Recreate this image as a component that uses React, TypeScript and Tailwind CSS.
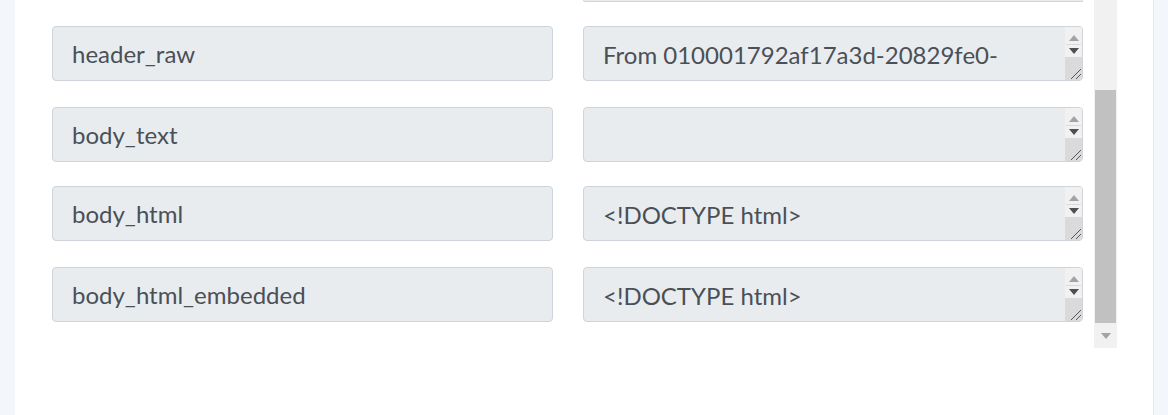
import React from 'react';

const rows = [
  { name: 'header_raw', top: 'mt-[24px]', value: ['From 010001792af17a3d-20829fe0-', 'b2c4-4bd2-9a6e-7f1d0c3b5e21-000000'] },
  { name: 'body_text', top: 'mt-[26px]', value: [] as string[] },
  { name: 'body_html', top: 'mt-[24px]', value: ['<!DOCTYPE html>', '<html lang="en">'] },
  { name: 'body_html_embedded', top: 'mt-[26px]', value: ['<!DOCTYPE html>', '<html lang="en">'] },
];

const font = { fontFamily: 'Lato, "Open Sans", sans-serif' };

function TextareaBar() {
  return (
    <div className="relative flex w-[17px] shrink-0 flex-col bg-[#f1f1f1]">
      <div className="flex h-[17px] items-end justify-center pb-[3px]">
        <svg width="10" height="6" viewBox="0 0 10 6">
          <path d="M5 0 L10 6 L0 6 Z" fill="#a3a3a3" />
        </svg>
      </div>
      <div className="mx-[1px] h-px bg-[#d9d9d9]" />
      <div className="flex h-[12px] items-start justify-center pt-[3px]">
        <svg width="10" height="6" viewBox="0 0 10 6">
          <path d="M0 0 L10 0 L5 6 Z" fill="#505050" />
        </svg>
      </div>
      <div className="flex-1 bg-[#dadada]" />
      <svg className="absolute bottom-0 right-0" width="14" height="14" viewBox="0 0 14 14">
        <path d="M13 3 L3 13" stroke="#555" strokeWidth="1" />
        <path d="M13 8 L8 13" stroke="#555" strokeWidth="1" />
      </svg>
    </div>
  );
}

function FakeTextarea({ lines }: { lines: string[] }) {
  return (
    <div className="flex h-[55px] w-[500px] overflow-hidden rounded-[4px] border border-[#ced4da] bg-[#e9ecef]">
      <div className="flex-1 overflow-hidden whitespace-nowrap pl-[19px] pt-[11px] text-[24px] leading-[33px] text-[#495057]" style={font}>
        {lines.map((l, i) => (
          <div key={i}>{l}</div>
        ))}
      </div>
      <TextareaBar />
    </div>
  );
}

export default function App() {
  return (
    <div className="flex h-[415px] w-[1168px] overflow-hidden bg-[#f3f6fa]">
      <div className="ml-[15px] flex h-full w-[1138px] flex-col bg-white">
        <div className="flex h-[348px] pl-[37px]">
          <div className="flex w-[1042px] flex-col overflow-hidden">
            <div className="ml-[531px] h-[2px] w-[500px] rounded-b-[4px] border-x border-b border-[#ced4da] bg-[#e9ecef]" />
            {rows.map((r) => (
              <div key={r.name} className={`${r.top} flex items-start gap-[30px]`}>
                <div
                  className="flex h-[55px] w-[501px] items-center rounded-[4px] border border-[#ced4da] bg-[#e9ecef] pl-[19px] text-[24px] text-[#495057]"
                  style={font}
                >
                  {r.name}
                </div>
                <FakeTextarea lines={r.value} />
              </div>
            ))}
          </div>
          <div className="flex w-[23px] flex-col bg-[#f1f1f1]">
            <div className="h-[90px]" />
            <div className="mx-[1px] h-[233px] bg-[#c1c1c1]" />
            <div className="flex flex-1 items-center justify-center">
              <svg width="10" height="6" viewBox="0 0 10 6">
                <path d="M0 0 L10 0 L5 6 Z" fill="#a3a3a3" />
              </svg>
            </div>
          </div>
        </div>
      </div>
      <div className="flex-1 border-l border-[#e6eaf0]" />
    </div>
  );
}
